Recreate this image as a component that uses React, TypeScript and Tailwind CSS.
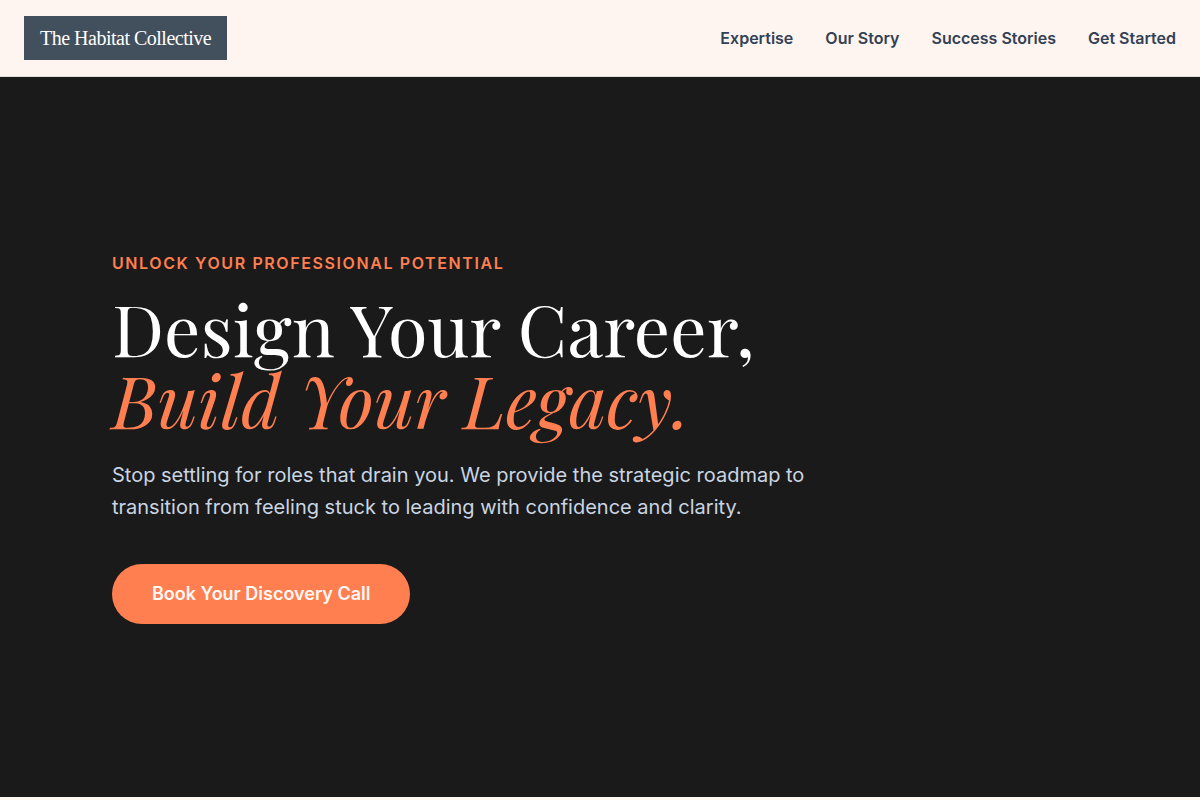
const navLinks = [
    { label: "Expertise", href: "#expertise" },
    { label: "Our Story", href: "#story" },
    { label: "Success Stories", href: "#success" },
    { label: "Get Started", href: "#start" },
];

function Navbar() {
    return (
        <header className="border-b border-[#e0dedb] bg-[#fff5f0] px-6 py-4">
            <nav className="flex items-center justify-between">
                <a href="#top" className="bg-[#42505d] px-4 py-2 font-['Liberation_Serif',serif] text-xl tracking-tight text-white">
                    The Habitat Collective
                </a>
                <ul className="flex gap-8">
                    {navLinks.map((link) => (
                        <li key={link.href}>
                            <a href={link.href} className="font-semibold text-[#334155] hover:text-[#ff7f50]">{link.label}</a>
                        </li>
                    ))}
                </ul>
            </nav>
        </header>
    );
}

function Hero() {
    return (
        <section className="flex min-h-[90vh] items-center bg-[#1a1a1a]">
            <div className="mx-auto w-full max-w-5xl px-6">
                <div className="max-w-3xl">
                    <p className="mb-4 font-semibold tracking-widest text-[#ff7f50] uppercase">Unlock Your Professional Potential</p>
                    <h1 className="mb-6 font-['Playfair_Display','Liberation_Serif',serif] text-7xl leading-none text-white">
                        Design Your Career,
                        <br />
                        <em className="text-[#ff7f50]">Build Your Legacy.</em>
                    </h1>
                    <p className="mb-10 text-xl leading-relaxed text-slate-300">
                        Stop settling for roles that drain you. We provide the strategic roadmap to transition from feeling stuck to leading with confidence and clarity.
                    </p>
                    <a href="#start" className="inline-block rounded-full bg-[#ff7f50] px-10 py-4 text-lg font-semibold text-[#fff8f5]">
                        Book Your Discovery Call
                    </a>
                </div>
            </div>
        </section>
    );
}

export default function App() {
    return (
        <div id="top" className="min-h-screen bg-[#fdf8f0] font-['Inter',sans-serif]">
            <Navbar />
            <main>
                <Hero />
            </main>
        </div>
    );
}
